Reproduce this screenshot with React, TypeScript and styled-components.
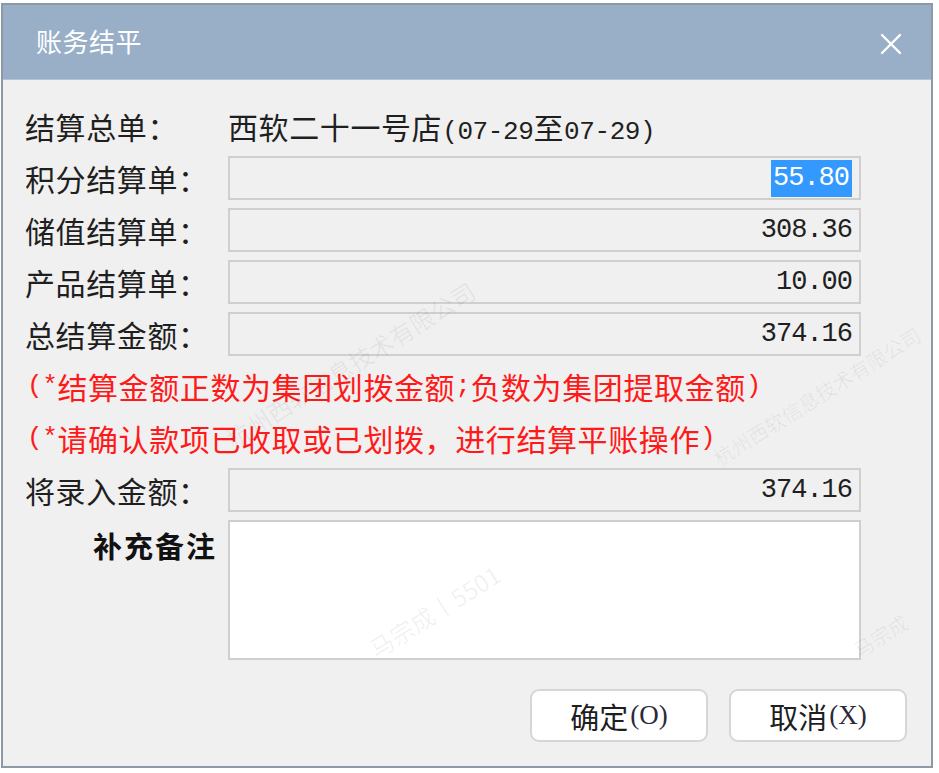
import styled, { createGlobalStyle } from 'styled-components'

const GlobalStyle = createGlobalStyle`
  html, body {
    margin: 0;
    padding: 0;
    background: #ffffff;
  }
  body {
    font-family: "Noto Sans CJK SC", "Noto Sans", sans-serif;
  }
`

type Field = {
  label: string;
  value: string;
  selected?: boolean;
}

const fields: Field[] = [
  { label: '积分结算单：', value: '55.80', selected: true },
  { label: '储值结算单：', value: '308.36' },
  { label: '产品结算单：', value: '10.00' },
  { label: '总结算金额：', value: '374.16' },
]

const CloseIcon = () => (
  <svg width="22" height="22" viewBox="0 0 22 22">
    <path d="M2 2 L20 20 M20 2 L2 20" stroke="#ffffff" strokeWidth="2.4" strokeLinecap="round" />
  </svg>
)

export default function App() {
  return (
    <Page>
      <GlobalStyle />
      <Dialog>
        <TitleBar>
          <Title>账务结平</Title>
          <CloseButton aria-label="关闭">
            <CloseIcon />
          </CloseButton>
        </TitleBar>

        <Body>
          <Row>
            <Label>结算总单：</Label>
            <Value>
              西软二十一号店<Ascii>(07-29</Ascii>至<Ascii>07-29)</Ascii>
            </Value>
          </Row>

          {fields.map((f) => (
            <Row key={f.label}>
              <Label>{f.label}</Label>
              <NumberBox>
                {f.selected ? <Selected>{f.value}</Selected> : f.value}
              </NumberBox>
            </Row>
          ))}

          <Note>
            <Ascii>(*</Ascii>结算金额正数为集团划拨金额<Ascii>;</Ascii>负数为集团提取金额<Ascii>)</Ascii>
          </Note>
          <Note>
            <Ascii>(*</Ascii>请确认款项已收取或已划拨，进行结算平账操作<Ascii>)</Ascii>
          </Note>

          <Row>
            <Label>将录入金额：</Label>
            <NumberBox>374.16</NumberBox>
          </Row>

          <MemoRow>
            <MemoLabel>补充备注</MemoLabel>
            <Memo />
          </MemoRow>

          <Footer>
            <Button>
              确定<Hotkey>(O)</Hotkey>
            </Button>
            <Button>
              取消<Hotkey>(X)</Hotkey>
            </Button>
          </Footer>
        </Body>

        <Watermark style={{ left: 368, top: 628 }}>马宗成丨5501</Watermark>
        <Watermark style={{ left: 225, top: 418 }}>杭州西软信息技术有限公司</Watermark>
        <Watermark style={{ left: 712, top: 440 }} $small>杭州西软信息技术有限公司</Watermark>
        <Watermark style={{ left: 852, top: 632 }} $small>马宗成</Watermark>
      </Dialog>
    </Page>
  )
}

// Styles
const Page = styled.div`
  width: 939px;
  height: 773px;
  overflow: hidden;
  background: #ffffff;
`

const Dialog = styled.div`
  position: relative;
  overflow: hidden;
  box-sizing: border-box;
  margin: 3px 0 0 1px;
  width: 932px;
  height: 765px;
  border: 2px solid #8d99a6;
  background: #f0f0f0;
  display: flex;
  flex-direction: column;
`

const TitleBar = styled.div`
  height: 75px;
  flex-shrink: 0;
  background: #99afc8;
  border-bottom: 1px solid #b4c4d6;
  box-sizing: border-box;
  display: flex;
  align-items: center;
  justify-content: space-between;
  padding: 0 29px 4px 33px;
`

const Title = styled.div`
  color: #ffffff;
  font-size: 26px;
  letter-spacing: 0.5px;
`

const CloseButton = styled.div`
  display: flex;
  align-items: center;
  margin-top: 8px;
`

const Body = styled.div`
  display: flex;
  flex-direction: column;
  gap: 8px;
  padding: 24px 24px 0 22px;
`

const Row = styled.div`
  display: grid;
  grid-template-columns: 203px 633px;
  align-items: center;
  height: 44px;
`

const Label = styled.div`
  font-size: 30px;
  letter-spacing: 0.6px;
  color: #1f1f1f;
  white-space: nowrap;
`

const Value = styled(Label)``

const Ascii = styled.span`
  font-family: "Liberation Mono", monospace;
  font-size: 26px;
  letter-spacing: -0.4px;
`

const NumberBox = styled.div`
  box-sizing: border-box;
  height: 44px;
  border: 2px solid #cfcfcf;
  background: #f0f0f0;
  display: flex;
  align-items: center;
  justify-content: flex-end;
  padding-right: 7px;
  font-family: "Liberation Mono", monospace;
  font-size: 27px;
  letter-spacing: -1px;
  color: #1f1f1f;
`

const Selected = styled.span`
  background: #3399ff;
  color: #ffffff;
  line-height: 37px;
  padding: 0 3px 0 2px;
`

const Note = styled.div`
  height: 44px;
  display: flex;
  align-items: center;
  padding-left: 2px;
  font-size: 30px;
  letter-spacing: 0.6px;
  color: #ff1a1a;
  white-space: nowrap;
`

const MemoRow = styled.div`
  display: grid;
  grid-template-columns: 203px 633px;
  align-items: start;
`

const MemoLabel = styled.div`
  justify-self: end;
  padding-right: 11px;
  margin-top: 4px;
  font-size: 29px;
  font-weight: 700;
  letter-spacing: 2px;
  color: #111111;
`

const Memo = styled.div`
  box-sizing: border-box;
  height: 140px;
  border: 2px solid #cfcfcf;
  background: #ffffff;
`

const Footer = styled.div`
  display: flex;
  justify-content: flex-end;
  gap: 21px;
  margin-top: 21px;
`

const Button = styled.div`
  box-sizing: border-box;
  width: 178px;
  height: 53px;
  border: 2px solid #d6d6d6;
  border-radius: 9px;
  background: #ffffff;
  display: flex;
  align-items: center;
  justify-content: center;
  font-size: 29px;
  color: #1f1f1f;
`

const Hotkey = styled.span`
  font-family: "Liberation Serif", serif;
  font-size: 27px;
  color: #2a2a3a;
  margin-left: 2px;
`

const Watermark = styled.div<{ $small?: boolean }>`
  position: absolute;
  pointer-events: none;
  white-space: nowrap;
  font-size: ${(p) => (p.$small ? '20px' : '24px')};
  color: rgba(0, 0, 0, 0.06);
  transform: rotate(-32deg);
  transform-origin: left center;
`
